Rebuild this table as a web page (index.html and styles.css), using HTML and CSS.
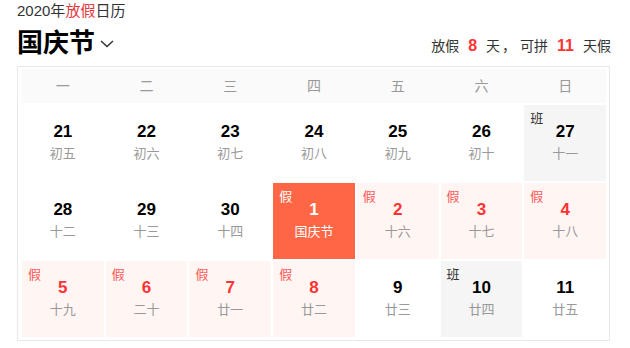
FILE: index.html
```html
<!DOCTYPE html>
<html lang="zh-CN">
<head>
<meta charset="utf-8">
<title>2020年放假日历</title>
<link rel="stylesheet" href="styles.css">
</head>
<body>
<div class="page">
  <div class="top">2020年<span class="red">放假</span>日历</div>
  <div class="titlebar">
    <div class="title">国庆节<svg class="chev" width="14" height="8" viewBox="0 0 14 8"><path d="M1 1 L7 6.5 L13 1" fill="none" stroke="#333" stroke-width="1.5"/></svg></div>
    <div class="summary">放假<span class="num">8</span>天<span class="comma">，</span>可拼<span class="num">11</span>天假</div>
  </div>
  <div class="cal">
    <div class="week">
      <div>一</div><div>二</div><div>三</div><div>四</div><div>五</div><div>六</div><div>日</div>
    </div>
    <div class="days">
      <div class="day"><b>21</b><span>初五</span></div>
      <div class="day"><b>22</b><span>初六</span></div>
      <div class="day"><b>23</b><span>初七</span></div>
      <div class="day"><b>24</b><span>初八</span></div>
      <div class="day"><b>25</b><span>初九</span></div>
      <div class="day"><b>26</b><span>初十</span></div>
      <div class="day work"><i>班</i><b>27</b><span>十一</span></div>

      <div class="day"><b>28</b><span>十二</span></div>
      <div class="day"><b>29</b><span>十三</span></div>
      <div class="day"><b>30</b><span>十四</span></div>
      <div class="day festival"><i>假</i><b>1</b><span>国庆节</span></div>
      <div class="day off"><i>假</i><b>2</b><span>十六</span></div>
      <div class="day off"><i>假</i><b>3</b><span>十七</span></div>
      <div class="day off"><i>假</i><b>4</b><span>十八</span></div>

      <div class="day off"><i>假</i><b>5</b><span>十九</span></div>
      <div class="day off"><i>假</i><b>6</b><span>二十</span></div>
      <div class="day off"><i>假</i><b>7</b><span>廿一</span></div>
      <div class="day off"><i>假</i><b>8</b><span>廿二</span></div>
      <div class="day"><b>9</b><span>廿三</span></div>
      <div class="day work"><i>班</i><b>10</b><span>廿四</span></div>
      <div class="day"><b>11</b><span>廿五</span></div>
    </div>
  </div>
</div>
</body>
</html>
```

FILE: styles.css
```css
html, body {
  margin: 0;
  padding: 0;
  background: #fff;
}
body {
  font-family: "Liberation Sans", "Noto Sans CJK SC", sans-serif;
  color: #333;
}
.page {
  width: 593px;
  padding-left: 17px;
}
.top {
  font-size: 15px;
  line-height: 22px;
  color: #333;
}
.red {
  color: #e4393c;
}
.titlebar {
  margin-top: 3px;
  height: 36px;
  display: flex;
  align-items: center;
  justify-content: space-between;
}
.title {
  display: flex;
  align-items: center;
  font-size: 26px;
  font-weight: bold;
  color: #000;
  line-height: 36px;
}
.chev {
  margin-left: 5px;
  margin-top: 2px;
}
.summary {
  margin-top: 6px;
  margin-right: -1px;
  font-size: 14px;
  line-height: 20px;
  color: #333;
}
.num {
  font-size: 16px;
  font-weight: bold;
  color: #f33;
  padding: 0 9px;
}
.comma {
  margin-left: 2px;
  margin-right: 4px;
}
.cal {
  margin-top: 5px;
  border: 1px solid #e8e8e8;
  padding: 2px 3px 3px 4px;
}
.week {
  display: grid;
  grid-template-columns: repeat(7, 1fr);
  column-gap: 2px;
  height: 34px;
  background: #fafafa;
  margin-bottom: 2px;
}
.week div {
  text-align: center;
  line-height: 34px;
  font-size: 14px;
  color: #999;
}
.days {
  display: grid;
  grid-template-columns: repeat(7, 1fr);
  grid-auto-rows: 76px;
  gap: 2px;
}
.day {
  position: relative;
  display: flex;
  flex-direction: column;
  align-items: center;
  padding-top: 17px;
  box-sizing: border-box;
}
.day b {
  font-size: 17px;
  line-height: 20px;
  color: #000;
}
.day span {
  margin-top: 3px;
  font-size: 13px;
  line-height: 18px;
  color: #999;
}
.day i {
  position: absolute;
  top: 5px;
  left: 6px;
  font-style: normal;
  font-size: 13px;
  line-height: 18px;
  color: #333;
}
.work {
  background: #f5f5f5;
}
.off {
  background: #fff5f3;
}
.off b {
  color: #f33;
}
.off i {
  color: #f55;
}
.festival {
  background: #ff6646;
}
.festival b,
.festival span,
.festival i {
  color: #fff;
}
```
